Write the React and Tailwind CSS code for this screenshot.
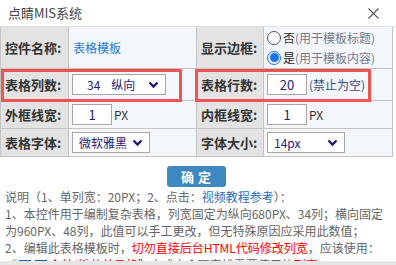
import React from 'react';

function Chevron() {
  return (
    <svg width="11" height="8" viewBox="0 0 11 8" className="shrink-0">
      <path d="M1.5 1.5 L5.5 5.5 L9.5 1.5" fill="none" stroke="#1c1c70" strokeWidth="2.4" />
    </svg>
  );
}

function FakeSelect({ width, children }) {
  return (
    <div className={`${width} h-[21px] bg-white border border-[#a6a6a6] flex items-center justify-between pl-[6px] pr-[6px] text-[12px] text-[#22227a]`}>
      <span className="whitespace-pre">{children}</span>
      <Chevron />
    </div>
  );
}

function FakeInput({ value }) {
  return (
    <div className="w-[40px] h-[21px] bg-white border border-[#a6a6a6] flex items-center justify-center text-[13px] text-[#22227a]">
      {value}
    </div>
  );
}

function Label({ children }) {
  return (
    <div className="bg-[#e3e3e3] border-r border-b border-[#c4c4c4] flex items-center pl-[4px] text-[13px] font-bold text-[#333] whitespace-nowrap">
      {children}
    </div>
  );
}

function Value({ children, className = '' }) {
  return (
    <div className={`bg-[#f3f6fa] border-r border-b border-[#c4c4c4] flex items-center pl-[3px] ${className}`}>
      {children}
    </div>
  );
}

function Radio({ checked }) {
  return checked ? (
    <span className="w-[14px] h-[14px] rounded-full border-[1.5px] border-[#1a73e8] flex items-center justify-center shrink-0">
      <span className="w-[9px] h-[9px] rounded-full bg-[#1a73e8]" />
    </span>
  ) : (
    <span className="w-[14px] h-[14px] rounded-full border border-[#555] bg-white shrink-0" />
  );
}

function TableIcon() {
  return (
    <svg width="12" height="11" viewBox="0 0 12 11" className="inline-block align-[-1px] mx-[2px]">
      <rect x="0.5" y="0.5" width="11" height="10" fill="#fff" stroke="#2a5fb0" />
      <rect x="0.5" y="0.5" width="11" height="3" fill="#2a5fb0" />
      <line x1="6" y1="3.5" x2="6" y2="10.5" stroke="#2a5fb0" />
      <line x1="0.5" y1="7" x2="11.5" y2="7" stroke="#2a5fb0" />
    </svg>
  );
}

export default function App() {
  return (
    <div className="w-[396px] h-[265px] bg-white overflow-hidden relative" style={{ fontFamily: '"Noto Sans CJK SC", "Liberation Sans", sans-serif' }}>
      {/* Title bar */}
      <div className="h-[27px] flex items-center justify-between pl-[8px] pr-[17px] border-b border-[#e2e2e2]">
        <span className="text-[13px] text-[#444]">点睛MIS系统</span>
        <svg width="11" height="11" viewBox="0 0 11 11">
          <path d="M0.5 0.5 L10.5 10.5 M10.5 0.5 L0.5 10.5" stroke="#555" strokeWidth="1.1" />
        </svg>
      </div>

      {/* Form table */}
      <div className="relative w-[392px]">
        <div className="grid grid-cols-[68px_128px_67px_129px] grid-rows-[42px_32px_28px_28px] border-l border-[#c4c4c4]">
          <Label>控件名称:</Label>
          <Value><span className="pl-[1px] text-[12px] text-[#1f7ad8]">表格模板</span></Value>
          <Label>显示边框:</Label>
          <Value className="flex-col items-start justify-center gap-[6px]">
            <div className="flex items-center gap-[2px] text-[12px] leading-[14px]">
              <Radio />
              <span className="text-[#333]">否<span className="text-[#7a7a8a]">(用于模板标题)</span></span>
            </div>
            <div className="flex items-center gap-[2px] text-[12px] leading-[14px]">
              <Radio checked />
              <span className="text-[#222]">是<span className="text-[#7a7a8a]">(用于模板内容)</span></span>
            </div>
          </Value>

          <Label>表格列数:</Label>
          <Value><FakeSelect width="w-[94px]">{'   34    纵向'}</FakeSelect></Value>
          <Label>表格行数:</Label>
          <Value>
            <FakeInput value="20" />
            <span className="ml-[2px] text-[12px] text-[#3c4a7c]">(禁止为空)</span>
          </Value>

          <Label>外框线宽:</Label>
          <Value>
            <FakeInput value="1" />
            <span className="ml-[2px] text-[12px] text-[#333]">PX</span>
          </Value>
          <Label>内框线宽:</Label>
          <Value>
            <FakeInput value="1" />
            <span className="ml-[2px] text-[12px] text-[#333]">PX</span>
          </Value>

          <Label>表格字体:</Label>
          <Value><FakeSelect width="w-[78px]">微软雅黑</FakeSelect></Value>
          <Label>字体大小:</Label>
          <Value><FakeSelect width="w-[78px]">14px</FakeSelect></Value>
        </div>

        {/* highlight annotations */}
        <div className="absolute left-[1px] top-[42px] w-[181px] h-[33px] border-[3px] border-[#f25252] pointer-events-none" />
        <div className="absolute left-[195px] top-[42px] w-[176px] h-[33px] border-[3px] border-[#f25252] pointer-events-none" />
      </div>

      {/* Confirm button */}
      <div className="w-[392px] flex justify-center pt-[9px]">
        <div className="w-[59px] h-[21px] rounded-[3px] bg-[#3d88c0] text-white text-[13px] font-bold flex items-center justify-center tracking-[4px] pl-[4px]">
          确定
        </div>
      </div>

      {/* Notes */}
      <div className="pl-[5px] pr-[4px] pt-[1px] text-[12px] leading-[17px] text-[#666] whitespace-nowrap">
        <div>说明（1、单列宽：20PX；2、点击：<span className="text-[#2a6ebb]">视频教程参考</span>）：</div>
        <div>1、本控件用于编制复杂表格，列宽固定为纵向680PX、34列；横向固定</div>
        <div>为960PX、48列，此值可以手工更改，但无特殊原因应采用此数值；</div>
        <div>2、编辑此表格模板时，<span className="text-[#ff0000]">切勿直接后台HTML代码修改列宽</span>，应该使用：</div>
        <div>“<TableIcon /><TableIcon /><span className="text-[#ff0000]">合并/拆分单元格</span>”方式来合理安排需要使用的<span className="text-[#ff0000]">列宽</span>。</div>
      </div>

      <div className="absolute left-0 bottom-0 w-[396px] h-[4px] bg-[#e6e6e6]" />
    </div>
  );
}
